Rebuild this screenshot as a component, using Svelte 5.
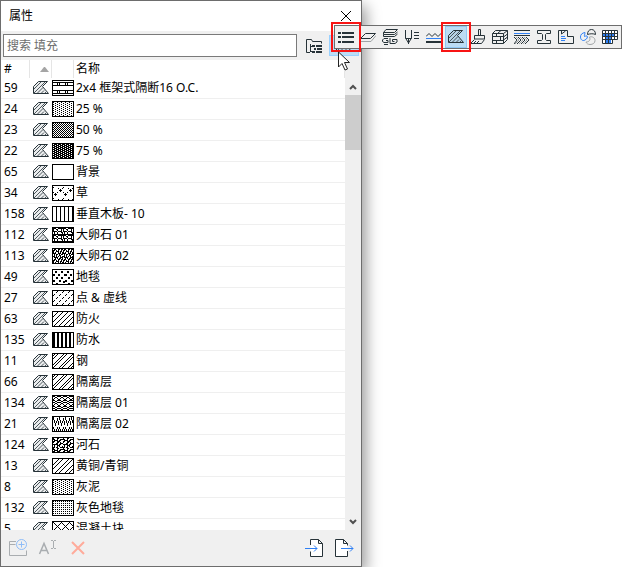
<script>
  // fill previews: each tile is repeated over the 20x14 swatch, '#' is a black dot
  const tiles = {
    framing: [
      "........",
      "########",
      "....#.#.",
      "....#.#.",
      "########",
      "........",
      "........",
      "........",
      "........",
      "########",
      "....#.#.",
      "....#.#.",
      "########",
      "........",
    ],
    p25: ["#...", "..#."],
    p50: ["#.", ".#"],
    p75: [".###", "##.#"],
    empty: ["."],
    grass: [
      "..........",
      "#.........",
      ".....#...#",
      ".......#..",
      "......###.",
      ".......#..",
      "#...#.....",
      "..#.......",
      ".###......",
      "..#.......",
      "..........",
    ],
    planks: ["...#", "...#"],
    cobble1: [
      "###..#####",
      "#..##...#.",
      "#...#...#.",
      "####.####.",
      ".#..#...##",
      ".#..#....#",
      "##########",
    ],
    cobble2: [
      ".##..##.##",
      "##.#.#..#.",
      "#..###.##.",
      "#.#..#.#.#",
      "###..###.#",
      ".#.##.#.##",
      ".#.#..##..",
      "##.#.#.#.#",
      ".####..###",
      "..#.#.##.#",
    ],
    carpet: [
      "............",
      "..##....##..",
      "..##....##..",
      "............",
      "##...##....#",
      "##...##....#",
      "............",
      "...##...##..",
      "...##...##..",
      "............",
      "##....##....",
      "##....##..##",
      "..........##",
      "...##.......",
    ],
    dashes: ["....#.", "...#..", "......", ".#....", "#.....", "......"],
    hatch: ["....#", "...#.", "..#..", ".#...", "#...."],
    bars: ["##..", "##.."],
    steel: [
      ".#..#....",
      "#..#.....",
      "..#.....#",
      ".#.....#.",
      "#.....#..",
      ".....#..#",
      "....#..#.",
      "...#..#..",
      "..#..#...",
    ],
    waves: [
      "##..##",
      "..##..",
      ".#..#.",
      "#....#",
      "##..##",
      "..##..",
    ],
    zigzag: [
      "#.....",
      "#...#.",
      "#...#.",
      ".#..#.",
      ".#.#.#",
      ".#.#.#",
      "..#..#",
      "..#..#",
      "..#...",
      "......",
      "#...#.",
      "#...#.",
      ".#.#.#",
      ".#.#.#",
    ],
    river: [
      "#...##....",
      "##..#..###",
      ".####.##..",
      "##..###...",
      "#...##.#..",
      "...##..###",
      "#####.##..",
      ".#..###...",
      ".#..#.#..#",
      "##.##..###",
    ],
    brass: [
      ".....#...#",
      "....#...#.",
      "...#...#..",
      "..#...#...",
      ".#...#....",
      "#...#.....",
      "...#.....#",
      "..#.....#.",
      ".#.....#..",
      "#.....#...",
    ],
    plaster: ["#...", "..#."],
    grid: ["#.", ".."],
    blocks: [
      "#.......",
      ".#.....#",
      "..#...#.",
      "...#.#..",
      "....#...",
      "...#.#..",
      "..#...#.",
      ".#.....#",
    ],
  };

  const fills = [
    { id: 59, fill: "framing", name: "2x4 框架式隔断16 O.C." },
    { id: 24, fill: "p25", name: "25 %" },
    { id: 23, fill: "p50", name: "50 %" },
    { id: 22, fill: "p75", name: "75 %" },
    { id: 65, fill: "empty", name: "背景" },
    { id: 34, fill: "grass", name: "草" },
    { id: 158, fill: "planks", name: "垂直木板- 10" },
    { id: 112, fill: "cobble1", name: "大卵石 01" },
    { id: 113, fill: "cobble2", name: "大卵石 02" },
    { id: 49, fill: "carpet", name: "地毯" },
    { id: 27, fill: "dashes", name: "点 & 虚线" },
    { id: 63, fill: "hatch", name: "防火" },
    { id: 135, fill: "bars", name: "防水" },
    { id: 11, fill: "steel", name: "钢" },
    { id: 66, fill: "steel", name: "隔离层" },
    { id: 134, fill: "waves", name: "隔离层 01" },
    { id: 21, fill: "zigzag", name: "隔离层 02" },
    { id: 124, fill: "river", name: "河石" },
    { id: 13, fill: "brass", name: "黄铜/青铜" },
    { id: 8, fill: "plaster", name: "灰泥" },
    { id: 132, fill: "grid", name: "灰色地毯" },
    { id: 5, fill: "blocks", name: "混凝土块" },
  ];

  // [class, path] pairs on a 16x16 grid
  const icons = {
    list: [["solid", "M0 3h3v2h-3z M4 3h12v2h-12z M0 7h3v2h-3z M4 7h12v2h-12z M0 12h3v2h-3z M4 12h12v2h-12z"]],
    layer: [
      ["gray", "M1 12.500h10l5-6"],
      ["ink", "M5.500 4.500h10l-5 5h-10z"],
    ],
    composite: [
      ["ink", "M4 .500h11.500l-3 3h-11z M1.500 3.500v2h11l3-2.500 M1.500 5.500v2h11l3-2.500"],
      ["ink", "M6 9.500h-4l-1.500 1.500v1.500l1.500 1h4v-2h-2 M8 9v5.500h5l2-1.500v-2.500h-4.500v2h2 M2 15.500h4"],
    ],
    pen: [
      ["ink", "M1.500 1v8l3 5l3-5v-8 M1.500 9.500h6 M4.500 10v5"],
      ["ink", "M10 3.500h5 M10 6.500h5 M10 9.500h5"],
    ],
    lines: [
      ["ink", "M0 7.500l3-3l3 3l3-3l3 3l3-3l1 1"],
      ["blue", "M0 9.500h16"],
      ["solid", "M0 12h16v2h-16z"],
    ],
    fill: [
      ["tint", "M5.500 1.500h9l-5 5l6 7h-15v-7z"],
      ["soft", "M1 9l7-7 M1 13l11-11 M4 13.500l6-6 M8 13.500l3-3 M11.500 13.500l1.500-1.500"],
      ["ink", "M5.500 1.500h9l-5 5l6 7h-15v-7z"],
    ],
    brush: [
      ["ink", "M8.500 6v-5.500h2v5.500 M4.500 10v-3.500h10v3.500z M4.500 10.500l-4 4h11l3-4 M4 14l2-2 M7 14l2-2"],
    ],
    material: [
      ["ink", "M.500 4.500h11v10h-11z M.500 4.500l3-3h12v9l-4 4 M11.500 4.500l4-3 M11.500 8l4-3 M11.500 11l4-3 M.500 7.500h11 M.500 11.500h11 M4.500 4.500v3 M8.500 7.500v4 M4.500 11.500v3 M6 4l3-2.500"],
    ],
    profile: [
      ["ink", "M0 1.500h16 M0 6.500h16"],
      ["blue", "M0 4.500h16"],
      ["ink", "M0 8l3 3l-3 4 M4 8l3 3l-4 4 M8 8l3 3l-4 4 M12 8l3 3l-4 4"],
      ["gray", "M2 8l3 3l-4 4 M6 8l3 3l-4 4 M10 8l3 3l-4 4"],
    ],
    beam: [
      ["ink", "M1.500 1.500h13v3h-4l-1 1v5l1 1h4v3h-13v-3h4l1-1v-5l-1-1h-4z"],
    ],
    zone: [
      ["ink", "M.500 1.500h9v6h6v7h-15z M3.500 2v3l4-3"],
      ["blue", "M3 7.500h4 M3 9.500h5 M3 11.500h4"],
    ],
    fan: [
      ["ink", "M7.500 5.500c0-3 1.500-5 4-5s4 2 4 5c-2-1-5-1-8 0z"],
      ["blue", "M5 3.500c-3 .500-4.500 2-4.500 4.500s2 4.500 4.500 3c2-1 3-3 2-4c-1-.500-2 .500-2.500 .500c-.500-1 .500-2 .500-4z"],
      ["gray", "M9.500 8c3-1 5.500 1 5.500 3.500s-2 4-5 4c-2 0-3.500-1-4-2.500c2 0 5-1 3.500-5z"],
    ],
    grid: [
      ["paper", "M1 2h14v8h-5v4h-9z"],
      ["bluefill", "M1 5h11v2h-11z M4 8h5v2h-5z M4 11h5v3h-5z"],
      ["ink", "M.500 1.500h15v9h-5v4h-10z M3.500 1v14 M6.500 1v14 M9.500 1v10 M12.500 1v10 M0 4.500h16 M0 7.500h16 M0 10.500h11"],
    ],
    folderTree: [
      ["ink", "M4 14.500h-3.500v-13h5l1 2h9v2 M4.500 6v8 M5 8.500h2 M5 13.500h2"],
      ["solid", "M6 7h3v2h-3z M10 7h6v2h-6z M8 10h2v2h-2z M11 10h5v2h-5z M6 13h3v2h-3z M10 13h6v2h-6z"],
    ],
  };

  const tools = [
    { icon: "list", label: "列表", marked: true },
    { icon: "layer", label: "图层" },
    { icon: "composite", label: "复合结构" },
    { icon: "pen", label: "画笔" },
    { icon: "lines", label: "线型" },
    { icon: "fill", label: "填充", marked: true, selected: true },
    { icon: "brush", label: "表面" },
    { icon: "material", label: "建筑材料" },
    { icon: "profile", label: "截面填充" },
    { icon: "beam", label: "截面" },
    { icon: "zone", label: "区域" },
    { icon: "fan", label: "分类" },
    { icon: "grid", label: "表格" },
  ];

  let search = $state("");

  function dots(tile) {
    return tile
      .map((row, y) => [...row].map((c, x) => (c === "#" ? `M${x} ${y}h1v1h-1z` : "")).join(""))
      .join("");
  }
</script>

{#snippet icon(name)}
  <svg class="icon" viewBox="0 0 16 16" aria-hidden="true">
    {#each icons[name] as [kind, d]}
      <path class={kind} {d} />
    {/each}
  </svg>
{/snippet}

<main>
  <section class="palette">
    <header>
      <h1>属性</h1>
      <button class="close" aria-label="关闭">
        <svg width="12" height="12" viewBox="0 0 12 12"><path class="black" d="M1 1l10 10M11 1L1 11" /></svg>
      </button>
    </header>

    <div class="search">
      <input type="text" aria-label="搜索" placeholder="搜索 填充" bind:value={search} />
      <button aria-label="文件夹视图">{@render icon("folderTree")}</button>
      <button class="hot" aria-label="选择属性">{@render icon("fill")}</button>
    </div>

    <div class="list">
      <div class="rows">
        <table>
          <thead>
            <tr>
              <th class="num">#</th>
              <th class="type" aria-label="类型">
                <svg width="9" height="5" viewBox="0 0 9 5"><path class="sort" d="M0 5l4-5h1l4 5z" /></svg>
              </th>
              <th class="preview" aria-label="预览"></th>
              <th class="name">名称</th>
            </tr>
          </thead>
          <tbody>
            {#each fills.filter((f) => f.name.includes(search)) as item (item.id)}
              <tr>
                <td class="num">{item.id}</td>
                <td class="type">{@render icon("fill")}</td>
                <td class="preview">
                  <svg class="swatch" width="20" height="14" shape-rendering="crispEdges">
                    <pattern
                      id="fill-{item.id}"
                      width={tiles[item.fill][0].length}
                      height={tiles[item.fill].length}
                      patternUnits="userSpaceOnUse"
                    >
                      <path d={dots(tiles[item.fill])} />
                    </pattern>
                    <rect width="20" height="14" fill="url(#fill-{item.id})" />
                  </svg>
                </td>
                <td class="name">{item.name}</td>
              </tr>
            {/each}
          </tbody>
        </table>
      </div>
      <div class="scroll">
        <button aria-label="向上"><svg width="8" height="6" viewBox="0 0 8 6"><path class="chevron" d="M1 5l3-3l3 3" /></svg></button>
        <div class="track"><div class="thumb"></div></div>
        <button aria-label="向下"><svg width="8" height="6" viewBox="0 0 8 6"><path class="chevron" d="M1 1l3 3l3-3" /></svg></button>
      </div>
    </div>

    <footer>
      <button disabled aria-label="新建">
        <svg width="20" height="20" viewBox="0 0 20 20">
          <path class="faded" d="M8 3.500h-6.500v14h17v-5M1.500 6.500h6" />
          <circle class="fadedblue" cx="13.500" cy="6.500" r="5" />
          <path class="fadedblue" d="M13.500 3.500v6M10.500 6.500h6" />
        </svg>
      </button>
      <button disabled aria-label="重命名">
        <svg width="20" height="20" viewBox="0 0 20 20">
          <path class="faded bold" d="M1.500 16l4.500-10.500l4.500 10.500M3 12.500h6" />
          <path class="faded" d="M13 2.500h2M16 2.500h2M15.500 3v7M13 10.500h2M16 10.500h2" />
        </svg>
      </button>
      <button disabled aria-label="删除">
        <svg width="20" height="20" viewBox="0 0 20 20"><path class="remove" d="M4 4l12 12M16 4L4 16" /></svg>
      </button>
      <span class="gap"></span>
      <button aria-label="导入">
        <svg width="20" height="20" viewBox="0 0 20 20">
          <path class="page" d="M6.500 7v-5.500h8l4 4v13h-12v-5M14.500 1.500v4h4" />
          <path class="blue" d="M1 10.500h12M10 7.500l3 3l-3 3" />
        </svg>
      </button>
      <button aria-label="导出">
        <svg width="20" height="20" viewBox="0 0 20 20">
          <path class="page" d="M13.500 13v5.500h-12v-17h8l4 4v2M9.500 1.500v4h4" />
          <path class="blue" d="M7 10.500h12M16 7.500l3 3l-3 3" />
        </svg>
      </button>
    </footer>
  </section>

  <nav class="toolbar" aria-label="属性类型">
    {#each tools as tool}
      <button class:marked={tool.marked} class:selected={tool.selected} aria-label={tool.label}>
        {@render icon(tool.icon)}
      </button>
    {/each}
    <svg class="cursor" width="13" height="20" viewBox="0 0 13 20" aria-hidden="true">
      <path d="M.500 1v15l3.500-3.500l3 6.500l2.500-1l-3-6.500h5z" />
    </svg>
  </nav>
</main>

<style>
  :global(body) {
    background: #fff;
  }

  main {
    position: relative;
    display: grid;
    grid-template-columns: 181fr 130fr;
    height: 100vh;
    overflow: hidden;
    font-family: "Noto Sans", "Noto Sans CJK SC", sans-serif;
    font-size: 12px;
    line-height: 16px;
    color: #000;
  }

  button {
    display: flex;
    align-items: center;
    justify-content: center;
    margin: 0;
    padding: 0;
    border: 0;
    background: none;
  }

  svg {
    display: block;
    fill: none;
  }

  .palette {
    display: flex;
    flex-direction: column;
    min-height: 0;
    box-sizing: border-box;
    border: 1px solid #6d6d6d;
    background: #f0f0f0;
    box-shadow: 4px 6px 14px rgba(0, 0, 0, 0.4);
  }

  header {
    display: flex;
    align-items: center;
    justify-content: space-between;
    height: 30px;
    padding: 0 5px 0 8px;
    background: #fff;
  }

  h1 {
    margin: 0;
    font-size: 12px;
    font-weight: normal;
  }

  .close {
    width: 20px;
    height: 20px;
  }

  .search {
    display: flex;
    align-items: center;
    height: 29px;
    padding: 0 2px;
  }

  .search input {
    flex: 1;
    min-width: 0;
    height: 23px;
    margin-right: 2px;
    box-sizing: border-box;
    padding: 0 3px;
    border: 1px solid #7a7a7a;
    border-radius: 0;
    background: #fff;
    font: inherit;
  }

  .search input::placeholder {
    color: #6d6d6d;
  }

  .search button {
    width: 30px;
    height: 21px;
  }

  .search .hot {
    box-sizing: border-box;
    border: 1px solid #99d1ff;
    background: #bcdcf4;
  }

  .list {
    display: flex;
    flex: 1;
    min-height: 0;
  }

  .rows {
    flex: 1;
    overflow: hidden;
    background: #fff;
  }

  table {
    width: 100%;
    table-layout: fixed;
    border-collapse: separate;
    border-spacing: 0;
  }

  th,
  td {
    box-sizing: border-box;
    padding: 0;
    text-align: left;
    font-weight: normal;
    white-space: nowrap;
  }

  th {
    height: 18px;
    border-right: 1px solid #e5e5e5;
  }

  td {
    height: 21px;
    border-bottom: 1px solid #efefef;
  }

  .num {
    width: 29px;
    padding-left: 3px;
  }

  .type {
    width: 22px;
    padding-left: 3px;
  }

  th.type {
    padding-left: 10px;
  }

  .preview {
    width: 22px;
  }

  .name {
    padding-left: 2px;
  }

  .swatch {
    border: 1px solid #000;
    background: #fff;
  }

  .swatch path {
    fill: #000;
  }

  .scroll {
    display: flex;
    flex-direction: column;
    width: 16px;
    padding-top: 18px;
  }

  .scroll button {
    height: 17px;
  }

  .track {
    flex: 1;
  }

  .thumb {
    height: 55px;
    background: #cdcdcd;
  }

  footer {
    display: flex;
    align-items: center;
    height: 36px;
    padding: 0 2px;
  }

  footer button {
    width: 30px;
    height: 30px;
  }

  .gap {
    flex: 1;
  }

  .toolbar {
    position: absolute;
    top: 25px;
    right: 0;
    display: flex;
    border: 1px solid #6d6d6d;
    background: #f0f0f0;
  }

  .toolbar button {
    position: relative;
    width: 22px;
    height: 22px;
  }

  .toolbar .selected {
    background: #bcdcf4;
    box-shadow: inset 0 0 0 1px #90c8f6;
  }

  .marked::after {
    content: "";
    position: absolute;
    inset: -4px;
    z-index: 1;
    border: 2px solid #f81414;
  }

  .cursor {
    position: absolute;
    top: 25px;
    left: 3px;
    z-index: 2;
    fill: #fff;
    stroke: #222;
  }

  .icon {
    width: 16px;
    height: 16px;
  }

  .ink,
  .page {
    stroke: #263238;
  }

  .page,
  .paper {
    fill: #fff;
  }

  .tint {
    fill: #9aa3a8;
    fill-opacity: 0.2;
  }

  .soft {
    stroke: #4b565c;
  }

  .gray {
    stroke: #a0a4a6;
  }

  .blue {
    stroke: #2f80f5;
  }

  .solid {
    fill: #263238;
  }

  .bluefill {
    fill: #2f80f5;
  }

  .black {
    stroke: #000;
  }

  .sort {
    fill: #a5a5a5;
  }

  .chevron {
    stroke: #505050;
    stroke-width: 2;
  }

  .faded {
    stroke: #a9adb0;
  }

  .bold {
    stroke-width: 1.5;
  }

  .fadedblue {
    stroke: #8ebcf8;
  }

  .remove {
    stroke: #ffab9b;
    stroke-width: 2;
  }
</style>
